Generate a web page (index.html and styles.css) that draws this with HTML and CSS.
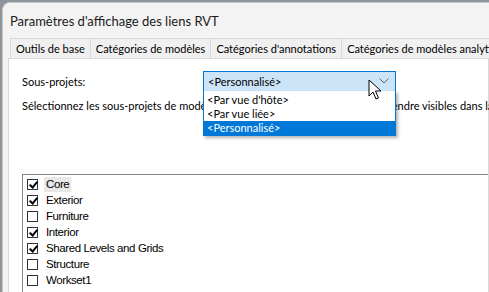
FILE: index.html
```html
<!DOCTYPE html>
<html lang="fr">
<head>
    <meta charset="UTF-8">
    <title>Paramètres d'affichage des liens RVT</title>
    <link rel="stylesheet" href="styles.css">
</head>
<body>
    <div class="window">
        <div class="titlebar">Paramètres d'affichage des liens RVT</div>

        <div class="tabs">
            <div class="tab">Outils de base</div>
            <div class="tab">Catégories de modèles</div>
            <div class="tab">Catégories d'annotations</div>
            <div class="tab">Catégories de modèles analytiques</div>
        </div>

        <div class="panel">
            <div class="row">
                <span class="label">Sous-projets:</span>
                <div class="combo-wrap">
                    <div class="combo">
                        <span>&lt;Personnalisé&gt;</span>
                        <svg class="chevron" width="10" height="6" viewBox="0 0 10 6">
                            <path d="M0.5 0.5 L5 5 L9.5 0.5" fill="none" stroke="#606060" stroke-width="1"/>
                        </svg>
                    </div>
                    <ul class="dropdown">
                        <li>&lt;Par vue d'hôte&gt;</li>
                        <li>&lt;Par vue liée&gt;</li>
                        <li class="selected">&lt;Personnalisé&gt;</li>
                    </ul>
                    <!-- mouse pointer -->
                    <svg class="cursor" width="14" height="22" viewBox="0 0 14 22">
                        <path d="M1 1 L1 17 L5 13 L8 20 L10.5 19 L7.5 12 L13 12 Z" fill="#fff" stroke="#000" stroke-width="1" stroke-linejoin="round"/>
                    </svg>
                </div>
            </div>

            <p class="hint">Sélectionnez les sous-projets de modèles liés que vous souhaiteriez pouvoir rendre visibles dans la vue hôte.</p>

            <div class="checklist">
                <div class="item"><span class="box checked"></span><span class="name focus">Core</span></div>
                <div class="item"><span class="box checked"></span><span class="name">Exterior</span></div>
                <div class="item"><span class="box"></span><span class="name">Furniture</span></div>
                <div class="item"><span class="box checked"></span><span class="name">Interior</span></div>
                <div class="item"><span class="box checked"></span><span class="name">Shared Levels and Grids</span></div>
                <div class="item"><span class="box"></span><span class="name">Structure</span></div>
                <div class="item"><span class="box"></span><span class="name">Workset1</span></div>
            </div>
        </div>
    </div>
</body>
</html>
```

FILE: styles.css
```css
body {
    margin: 0;
    width: 489px;
    height: 292px;
    overflow: hidden;
    background-color: #8d949c;
    font-family: Lato, "Noto Sans", sans-serif;
    font-size: 11px;
    color: #000;
}
.window {
    margin: 2px 0 0 2px;
    height: 300px;
    background-color: #f3f3f3;
    border-top-left-radius: 8px;
    border-left: 1px solid #c9c9c9;
    border-top: 1px solid #c9c9c9;
    overflow: hidden;
}
.titlebar {
    height: 35px;
    padding-left: 7px;
    line-height: 37px;
    font-size: 13px;
    color: #1a1a1a;
    white-space: nowrap;
}
.tabs {
    display: flex;
    margin-left: 7px;
    height: 20px;
    white-space: nowrap;
}
.tab {
    padding: 0 5px;
    line-height: 20px;
    border: 1px solid #d9d9d9;
    border-bottom: none;
    border-right: none;
    background-color: #f0f0f0;
}
.panel {
    margin-left: 5px;
    height: 240px;
    background-color: #fff;
    border: 1px solid #d9d9d9;
    padding: 12px 0 0 13px;
}
.row {
    display: flex;
    align-items: center;
    height: 20px;
}
.label {
    width: 181px;
}
.combo-wrap {
    position: relative;
}
.combo {
    display: flex;
    align-items: center;
    justify-content: space-between;
    box-sizing: border-box;
    width: 193px;
    height: 21px;
    padding: 0 6px 0 4px;
    background-color: #cce4f7;
    border: 1px solid #0078d7;
}
.dropdown {
    position: absolute;
    top: 20px;
    left: 0;
    box-sizing: border-box;
    width: 193px;
    margin: 0;
    padding: 0;
    list-style: none;
    background-color: #fff;
    border: 1px solid #0078d7;
    border-top: none;
    box-shadow: 2px 2px 3px rgba(0, 0, 0, 0.3);
    z-index: 2;
}
.dropdown li {
    height: 13px;
    line-height: 13px;
    padding-left: 3px;
    margin-top: 1px;
}
.dropdown li:first-child {
    margin-top: 2px;
}
.dropdown li.selected {
    height: 14px;
    line-height: 14px;
    background-color: #0078d7;
    color: #fff;
}
.cursor {
    position: absolute;
    top: 8px;
    left: 165px;
    z-index: 3;
}
.hint {
    margin: 8px 0 0 0;
    white-space: nowrap;
}
.checklist {
    margin-top: 62px;
    height: 140px;
    background-color: #fff;
    border: 1px solid #828790;
    border-right: none;
    padding: 1px 0 0 4px;
    font-family: "Liberation Sans", Arial, sans-serif;
    font-size: 11.5px;
    letter-spacing: -0.4px;
}
.item {
    display: flex;
    align-items: center;
    height: 16px;
}
.box {
    box-sizing: border-box;
    width: 11px;
    height: 11px;
    border: 1px solid #333;
    margin-right: 6px;
    position: relative;
}
.box.checked::after {
    content: "";
    position: absolute;
    left: 3px;
    top: 0;
    width: 3px;
    height: 6px;
    border: solid #000;
    border-width: 0 2px 2px 0;
    transform: rotate(40deg);
}
.name {
    padding: 0 2px;
    line-height: 15px;
}
.name.focus {
    background-color: #e8e8e8;
}
```
